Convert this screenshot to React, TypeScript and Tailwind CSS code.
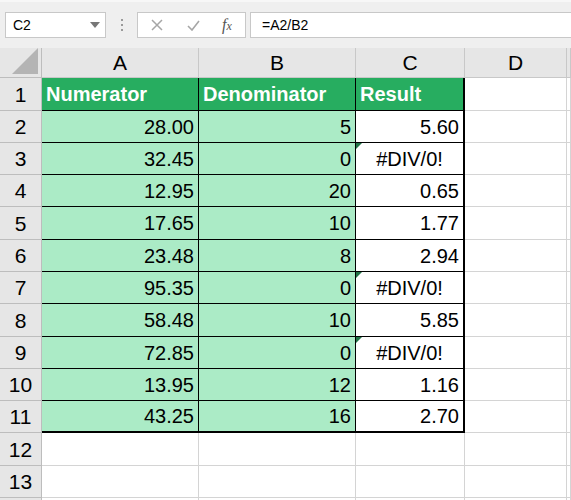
const rows: { n: string; d: string; r: string; err?: boolean }[] = [
  { n: "28.00", d: "5", r: "5.60" },
  { n: "32.45", d: "0", r: "#DIV/0!", err: true },
  { n: "12.95", d: "20", r: "0.65" },
  { n: "17.65", d: "10", r: "1.77" },
  { n: "23.48", d: "8", r: "2.94" },
  { n: "95.35", d: "0", r: "#DIV/0!", err: true },
  { n: "58.48", d: "10", r: "5.85" },
  { n: "72.85", d: "0", r: "#DIV/0!", err: true },
  { n: "13.95", d: "12", r: "1.16" },
  { n: "43.25", d: "16", r: "2.70" },
];

const heights = ["h-[33px]", "h-[32px]", "h-[32px]", "h-[32px]", "h-[33px]", "h-[32px]", "h-[32px]", "h-[33px]", "h-[32px]", "h-[32px]", "h-[32px]", "h-[33px]", "h-[32px]"];

const cols = "grid grid-cols-[42px_157px_157px_109px_102px_1fr] leading-none";

function RowHead({ label }: { label: string }) {
  return (
    <div className="flex items-center justify-center bg-[#e6e6e6] border-r border-b border-[#bdbdbd] text-[21px] text-black">
      {label}
    </div>
  );
}

function Empty() {
  return <div className="border-r border-b border-[#d4d4d4] bg-white" />;
}

export default function App() {
  return (
    <div className="w-[571px] h-[500px] overflow-hidden bg-white font-['Liberation_Sans',sans-serif] select-none">
      {/* formula bar */}
      <div className="h-[48px] bg-[#efefef] border-t-2 border-[#f7f7f7] flex items-start pt-[10px] pl-[5px]">
        <div className="w-[101px] h-[26px] bg-white border border-[#c8c8c8] flex items-center justify-between pl-[7px] pr-[5px]">
          <span className="text-[14px] text-black">C2</span>
          <svg width="10" height="6" viewBox="0 0 10 6"><path d="M0 0h10L5 6z" fill="#777" /></svg>
        </div>
        <div className="w-[31px] h-[26px] flex flex-col items-center justify-center gap-[3px]">
          <span className="w-[2px] h-[2px] bg-[#9a9a9a]" />
          <span className="w-[2px] h-[2px] bg-[#9a9a9a]" />
          <span className="w-[2px] h-[2px] bg-[#9a9a9a]" />
        </div>
        <div className="w-[109px] h-[26px] bg-white border border-[#c8c8c8] flex items-center">
          <svg className="ml-[13px]" width="12" height="12" viewBox="0 0 12 12"><path d="M1 1l10 10M11 1L1 11" stroke="#a6a6a6" strokeWidth="1.5" /></svg>
          <svg className="ml-[24px]" width="13" height="11" viewBox="0 0 13 11"><path d="M1 6l4 4 7-9" stroke="#a6a6a6" strokeWidth="1.6" fill="none" /></svg>
          <span className="ml-[22px] font-['Liberation_Serif',serif] italic text-[16px] text-[#555]">f<span className="text-[12px]">x</span></span>
        </div>
        <div className="ml-[4px] flex-1 h-[26px] bg-white border border-[#c8c8c8] border-r-0 flex items-center pl-[11px]">
          <span className="text-[14px] text-black">=A2/B2</span>
        </div>
      </div>

      {/* column headers */}
      <div className={`${cols} h-[30px]`}>
        <div className="bg-[#e6e6e6] border-r border-b border-[#bdbdbd] relative">
          <svg className="absolute right-[3px] bottom-[3px]" width="26" height="26" viewBox="0 0 26 26"><path d="M26 0v26H0z" fill="#b4b4b4" /></svg>
        </div>
        {["A", "B", "C", "D", ""].map((c, i) => (
          <div key={i} className="flex items-center justify-center bg-[#e6e6e6] border-r border-b border-[#c8c8c8] text-[21px] text-black">
            {c}
          </div>
        ))}
      </div>

      {/* row 1 */}
      <div className={`${cols} ${heights[0]}`}>
        <RowHead label="1" />
        {["Numerator", "Denominator"].map((h) => (
          <div key={h} className="flex items-center pl-[4px] bg-[#27ad60] border-r border-b border-black text-[20px] font-bold text-white">
            {h}
          </div>
        ))}
        <div className="flex items-center pl-[4px] bg-[#27ad60] border-r-2 border-b border-black text-[20px] font-bold text-white">
          Result
        </div>
        <Empty />
        <Empty />
      </div>

      {rows.map((r, i) => {
        const last = i === rows.length - 1;
        const b = last ? "border-b-2" : "border-b";
        return (
          <div key={i} className={`${cols} ${heights[i + 1]}`}>
            <RowHead label={String(i + 2)} />
            <div className={`flex items-center justify-end pr-[4px] bg-[#abebc6] border-r ${b} border-black text-[20px] text-black`}>
              {r.n}
            </div>
            <div className={`flex items-center justify-end pr-[4px] bg-[#abebc6] border-r ${b} border-black text-[20px] text-black`}>
              {r.d}
            </div>
            <div className={`relative flex items-center ${r.err ? "justify-center" : "justify-end pr-[4px]"} bg-white border-r-2 ${b} border-black text-[20px] text-black`}>
              {r.err && (
                <svg className="absolute left-0 top-0" width="6" height="6" viewBox="0 0 6 6"><path d="M0 0h6L0 6z" fill="#217346" /></svg>
              )}
              {r.r}
            </div>
            <Empty />
            <Empty />
          </div>
        );
      })}

      {["12", "13"].map((n, i) => (
        <div key={n} className={`${cols} ${heights[11 + i]}`}>
          <RowHead label={n} />
          <Empty />
          <Empty />
          <Empty />
          <Empty />
          <Empty />
        </div>
      ))}
      <div className={`${cols} h-[10px]`}>
        <RowHead label="" />
        <Empty />
        <Empty />
        <Empty />
        <Empty />
        <Empty />
      </div>
    </div>
  );
}
